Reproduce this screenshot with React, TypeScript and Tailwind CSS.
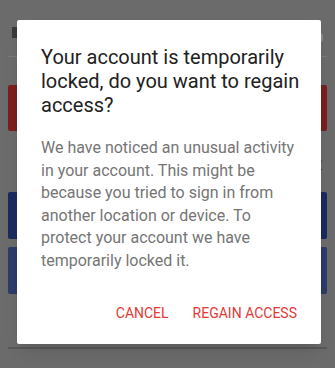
import React from "react";

export default function App() {
  return (
    <div className="relative w-full h-[368px] overflow-hidden bg-[#6b6b6b] font-['Roboto',sans-serif]">
      {/* Page behind the dialog (dimmed) */}
      <div className="px-2 flex flex-col">
        <div className="h-[57px] flex items-start justify-between border-b border-[#7a7a7a] pt-[27px] px-1">
          <div className="w-[8px] h-[11px] bg-[#3a3a3a]" />
          <div className="w-[6px] h-[9px] mt-[6px] bg-[#8a8a8a] rounded-sm" />
        </div>
        <div className="mt-[28px] h-[46px] rounded-[2px] bg-[#7a1f1c]" />
        <div className="mt-[25px] flex justify-end pr-[5px]">
          <span className="text-[13px] leading-[16px] text-[#2e2e2e] underline">Forgot password?</span>
        </div>
        <div className="mt-[20px] h-[47px] rounded-[2px] bg-[#1b2a5e]" />
        <div className="mt-[8px] h-[47px] rounded-[2px] bg-[#2e3a68]" />
        <div className="mt-[53px] h-[2px] bg-[#585858]" />
      </div>

      {/* Dialog */}
      <div className="absolute left-[17px] top-[20px] w-[304px] h-[324px] bg-white rounded-[2px] shadow-lg flex flex-col">
        <div className="pl-6 pr-5 pt-[25px]">
          <h2 className="text-[20px] leading-[24px] text-[#212121] font-normal">
            Your account is temporarily locked, do you want to regain access?
          </h2>
          <p className="mt-[20px] text-[16px] leading-[22.5px] text-[#757575]">
            We have noticed an unusual activity in your account. This might be because you tried to sign in from another location or device. To protect your account we have temporarily locked it.
          </p>
        </div>
        <div className="mt-auto mb-[13px] flex justify-end items-center gap-2 pr-4">
          <button className="h-9 px-2 text-[14px] text-[#e53935] uppercase">Cancel</button>
          <button className="h-9 px-2 text-[14px] text-[#e53935] uppercase">Regain access</button>
        </div>
      </div>
    </div>
  );
}
